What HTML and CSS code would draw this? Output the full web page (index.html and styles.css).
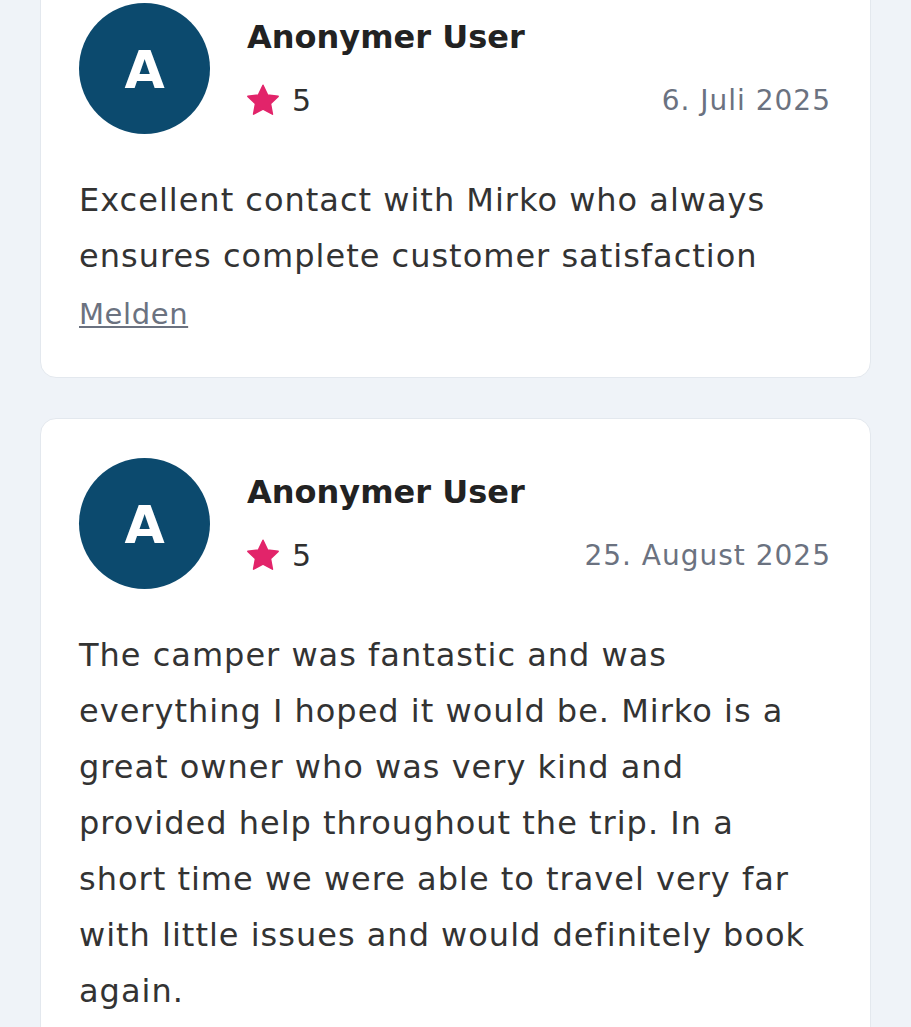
FILE: index.html
```html
<!DOCTYPE html>
<html>
<head>
    <title>Bewertungen</title>
    <link rel="stylesheet" href="styles.css">
</head>
<body>
    <div class="reviews">
        <div class="review">
            <div class="review-head">
                <div class="avatar">A</div>
                <div class="meta">
                    <div class="name">Anonymer User</div>
                    <div class="rating-row">
                        <span class="rating">
                            <svg class="star" viewBox="0 0 24 24"><path d="M12 1.5l3.1 6.5 7 .9-5.1 4.9 1.3 7L12 17.4l-6.3 3.4 1.3-7-5.1-4.9 7-.9z" stroke-linejoin="round"/></svg>
                            5
                        </span>
                        <span class="date">6. Juli 2025</span>
                    </div>
                </div>
            </div>
            <p class="text">Excellent contact with Mirko who always ensures complete customer satisfaction</p>
            <a href="#" class="report">Melden</a>
        </div>
        <div class="review">
            <div class="review-head">
                <div class="avatar">A</div>
                <div class="meta">
                    <div class="name">Anonymer User</div>
                    <div class="rating-row">
                        <span class="rating">
                            <svg class="star" viewBox="0 0 24 24"><path d="M12 1.5l3.1 6.5 7 .9-5.1 4.9 1.3 7L12 17.4l-6.3 3.4 1.3-7-5.1-4.9 7-.9z" stroke-linejoin="round"/></svg>
                            5
                        </span>
                        <span class="date">25. August 2025</span>
                    </div>
                </div>
            </div>
            <p class="text">The camper was fantastic and was everything I hoped it would be. Mirko is a great owner who was very kind and provided help throughout the trip. In a short time we were able to travel very far with little issues and would definitely book again.</p>
        </div>
    </div>
</body>
</html>
```

FILE: styles.css
```css
body {
    font-family: "DejaVu Sans", Arial, sans-serif;
    background-color: #eff3f8;
    margin: 0;
    padding: 0;
    color: #333333;
}
.reviews {
    margin-top: -37px;
    padding: 0 40px;
    display: flex;
    flex-direction: column;
    gap: 40px;
}
.review {
    background-color: #ffffff;
    border: 1px solid #e3e8ee;
    border-radius: 16px;
    padding: 39px 39px 35px 38px;
}
.review-head {
    display: flex;
    align-items: center;
    gap: 39px;
}
.avatar {
    width: 131px;
    height: 131px;
    border-radius: 50%;
    background-color: #0c4a6e;
    color: #ffffff;
    font-size: 52px;
    font-weight: 700;
    padding-top: 3px;
    box-sizing: border-box;
    display: flex;
    align-items: center;
    justify-content: center;
    flex-shrink: 0;
}
.meta {
    flex: 1;
    display: flex;
    flex-direction: column;
    gap: 20px;
}
.name {
    font-size: 32px;
    font-weight: 700;
    color: #222222;
    line-height: 44px;
    margin-left: -2px;
}
.rating-row {
    display: flex;
    justify-content: space-between;
    align-items: center;
    line-height: 44px;
}
.rating {
    display: flex;
    align-items: center;
    gap: 11px;
    font-size: 30px;
    color: #2f2f2f;
}
.star {
    width: 36px;
    height: 36px;
    margin-left: -4px;
    fill: #e2246a;
    stroke: #e2246a;
    stroke-width: 1;
}
.date {
    font-size: 28px;
    letter-spacing: 1px;
    color: #6b7280;
}
.text {
    font-size: 32px;
    letter-spacing: 1px;
    line-height: 56px;
    margin: 38px 0 0;
}
.report {
    display: inline-block;
    margin-top: 2px;
    font-size: 29px;
    line-height: 56px;
    letter-spacing: 0.6px;
    color: #6b7280;
}
```
